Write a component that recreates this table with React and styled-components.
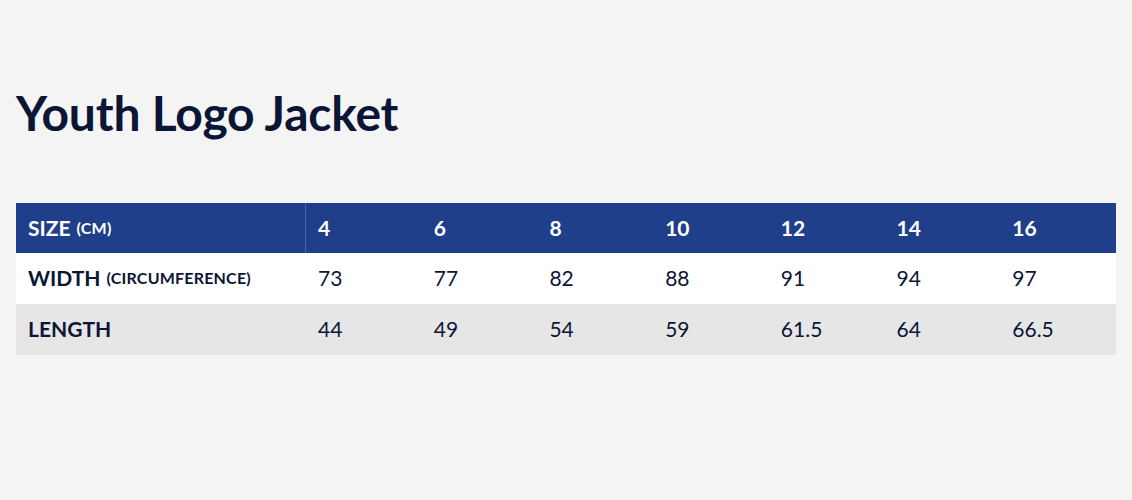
import React from 'react';
import styled, { createGlobalStyle } from 'styled-components';

const sizes = ['4', '6', '8', '10', '12', '14', '16'];

const rows = [
  { label: 'WIDTH', note: '(CIRCUMFERENCE)', values: ['73', '77', '82', '88', '91', '94', '97'], shade: '#ffffff' },
  { label: 'LENGTH', note: '', values: ['44', '49', '54', '59', '61.5', '64', '66.5'], shade: '#e6e6e6' },
];

const GlobalStyle = createGlobalStyle`
  html, body {
    margin: 0;
    padding: 0;
    background: #f4f4f4;
  }
  body {
    font-family: Lato, "Open Sans", "Liberation Sans", sans-serif;
  }
`;

const Page = styled('div')`
  width: 1132px;
  height: 500px;
  padding: 83px 16px 0;
  box-sizing: border-box;
  background: #f4f4f4;
`;

const Title = styled('h1')`
  margin: 0 0 60px;
  font-family: Lato, sans-serif;
  font-weight: 700;
  font-size: 48px;
  line-height: 60px;
  letter-spacing: -0.2px;
  color: #0b1535;
`;

const Table = styled('div')`
  display: grid;
  grid-template-columns: 290px repeat(7, 1fr);
  width: 1100px;
`;

const Row = styled('div')`
  display: contents;
`;

const Cell = styled('div')`
  height: ${({ head }) => (head ? '50px' : '51px')};
  display: flex;
  align-items: center;
  padding-left: 12px;
  padding-bottom: 2px;
  box-sizing: border-box;
  background: ${({ bg }) => bg};
  color: ${({ head }) => (head ? '#ffffff' : '#0b1535')};
  font-size: 21px;
  font-weight: ${({ bold }) => (bold ? 700 : 400)};
  border-right: ${({ divider }) => (divider ? '1px solid #4a66a8' : 'none')};
`;

const Note = styled('span')`
  font-size: 16px;
  margin-left: 6px;
  letter-spacing: 0.2px;
`;

export default function App() {
  return (
    <Page>
      <GlobalStyle />
      <Title>Youth Logo Jacket</Title>
      <Table>
        <Row>
          <Cell head bold bg="#1f3f8a" divider>
            SIZE<Note>(CM)</Note>
          </Cell>
          {sizes.map((s) => (
            <Cell key={s} head bold bg="#1f3f8a">{s}</Cell>
          ))}
        </Row>
        {rows.map((r) => (
          <Row key={r.label}>
            <Cell bold bg={r.shade}>
              {r.label}
              {r.note && <Note>{r.note}</Note>}
            </Cell>
            {r.values.map((v, i) => (
              <Cell key={i} bg={r.shade}>{v}</Cell>
            ))}
          </Row>
        ))}
      </Table>
    </Page>
  );
}
